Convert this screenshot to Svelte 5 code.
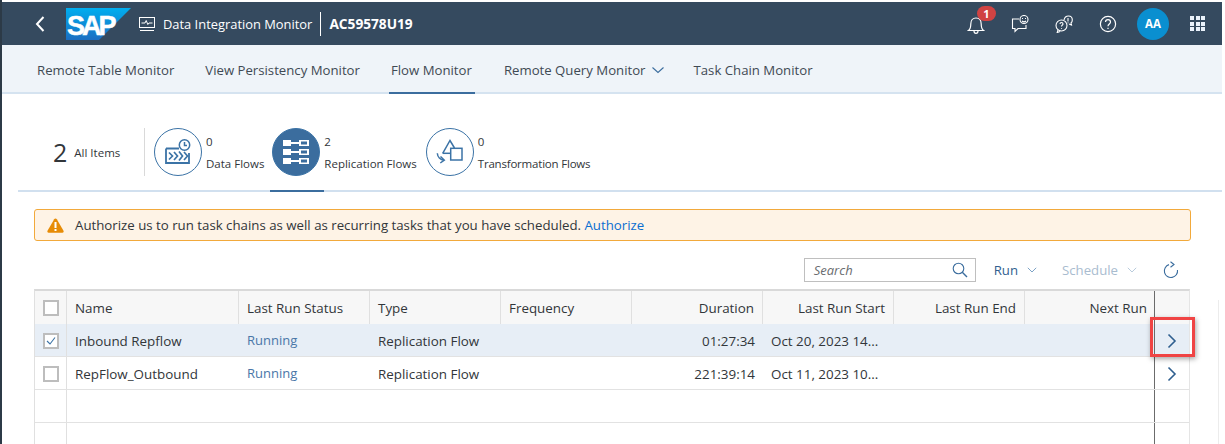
<script>
  const nav = ['Remote Table Monitor', 'View Persistency Monitor', 'Flow Monitor', 'Remote Query Monitor', 'Task Chain Monitor'];
  const heads = [
    { t: 'Name' }, { t: 'Last Run Status' }, { t: 'Type' }, { t: 'Frequency' },
    { t: 'Duration', r: true }, { t: 'Last Run Start', r: true }, { t: 'Last Run End', r: true }, { t: 'Next Run', r: true }
  ];
  const rows = [
    { sel: true, name: 'Inbound Repflow', status: 'Running', type: 'Replication Flow', dur: '01:27:34', start: 'Oct 20, 2023 14...' },
    { sel: false, name: 'RepFlow_Outbound', status: 'Running', type: 'Replication Flow', dur: '221:39:14', start: 'Oct 11, 2023 10...' }
  ];
</script>

<div class="page">
  <header class="shell">
    <svg class="back" width="12" height="18" viewBox="0 0 12 18"><path d="M9.5 2 L3 9 L9.5 16" fill="none" stroke="#fff" stroke-width="2"/></svg>
    <div class="logo">
      <svg width="65" height="32" viewBox="0 0 65 32">
        <defs><linearGradient id="sapg" x1="0" y1="0" x2="0" y2="1"><stop offset="0" stop-color="#00aeef"/><stop offset="1" stop-color="#1b6ec2"/></linearGradient></defs>
        <polygon points="0,0 65,0 33,32 0,32" fill="url(#sapg)"/>
      </svg>
      <span class="sap">SAP</span>
    </div>
    <svg class="monitor" width="18" height="16" viewBox="0 0 18 16" fill="none" stroke="#fff" stroke-width="1">
      <rect x="1.5" y="1.5" width="15" height="10"/><path d="M3.5 7h3.5l1.2-2.5 1.6 4 1.2-1.5h3.500"/><path d="M2 14.500h14"/>
    </svg>
    <span class="title">Data Integration Monitor</span>
    <span class="divider"></span>
    <span class="tenant">AC59578U19</span>
    <div class="actions">
      <div class="bell">
        <svg width="18" height="20" viewBox="0 0 18 20" fill="none" stroke="#fff" stroke-width="1.200">
          <path d="M1.500 16.500c2-1.500 2.300-3 2.300-6.500 0-3.500 2-6 5.200-6s5.200 2.500 5.200 6c0 3.500.3 5 2.300 6.500z"/><path d="M7 17c0 1.500 1 2.300 2 2.300s2-.8 2-2.300"/>
        </svg>
        <span class="badge">1</span>
      </div>
      <svg class="ic1" width="18" height="18" viewBox="0 0 18 18" fill="none" stroke="#fff" stroke-width="1.100">
        <path d="M8 4H1.500v9.500H4v3l3-3h8V10"/><circle cx="13" cy="4.500" r="4"/><path d="M11 3.500h1M14 3.500h1M11 6c1.200 1 2.800 1 4 0"/>
      </svg>
      <svg class="ic2" width="18" height="18" viewBox="0 0 18 18" fill="none" stroke="#fff" stroke-width="1.100">
        <circle cx="6.500" cy="10.500" r="5.500"/><path d="M3 15l-.8 2.500 3-1"/><path d="M5 9c0-2 3-2 3 0 0 1-1.500 1-1.500 2.500M6.500 13v.8"/>
        <path d="M9 5c.5-2.500 2.500-4 4.500-4 2.300 0 3.800 1.800 3.800 4 0 1.300-.5 2.300-1.300 3l.5 2-2.500-1"/><path d="M13 3v3.500M13 7.500v.8"/>
      </svg>
      <svg class="ic3" width="18" height="18" viewBox="0 0 18 18" fill="none" stroke="#fff" stroke-width="1.200">
        <circle cx="9" cy="9" r="7.600"/><path d="M6.500 7c0-3.200 5-3.200 5 0 0 2-2.500 2-2.500 4.300M9 12.800v1.200"/>
      </svg>
      <span class="avatar">AA</span>
      <div class="grid9"><i></i><i></i><i></i><i></i><i></i><i></i><i></i><i></i><i></i></div>
    </div>
  </header>

  <nav class="subnav">
    {#each nav as n, i}
      <span class="navitem" class:active={i === 2}>
        {n}
        {#if i === 3}
          <svg width="14" height="8" viewBox="0 0 14 8"><path d="M1.500 1.500 L7 6.500 L12.500 1.500" fill="none" stroke="#3b6d9e" stroke-width="1.100"/></svg>
        {/if}
      </span>
    {/each}
  </nav>

  <section class="tabs">
    <div class="allitems"><span class="big">2</span><span class="small">All Items</span></div>
    <span class="tabsep"></span>
    <div class="tab">
      <span class="circle">
        <svg width="26" height="26" viewBox="0 0 26 26" fill="none" stroke="#3b73a6" stroke-width="1.500">
          <path d="M1 9.500v14.500h23V14" stroke-width="1.800"/><path d="M1 9.500h13" stroke-width="2"/>
          <path d="M4 13.500l3.500 3.500L4 20.500M9 13l3.500 4-3.500 4M14 12.500l3.500 4.500L14 21.500M19 13l3.500 4L19 21" stroke-width="1.700"/>
          <circle cx="19.500" cy="6" r="5.200" fill="#fff"/><path d="M19.500 3v3.500h2.500"/>
        </svg>
      </span>
      <div class="tabtext"><span>0</span><span>Data Flows</span></div>
    </div>
    <div class="tab selected">
      <span class="circle filled">
        <svg width="26" height="24" viewBox="0 0 26 24">
          <g fill="#fff">
            <path d="M0 0h8v2h8V0h10v6H16V4H8v2H0z M18 1.500v3h6v-3z" fill-rule="evenodd"/>
            <path d="M0 9h8v2h8V9h10v6H16v-2H8v2H0z M18 10.500v3h6v-3z" fill-rule="evenodd"/>
            <path d="M0 18h8v2h8v-2h10v6H16v-2H8v2H0z M18 19.500v3h6v-3z" fill-rule="evenodd"/>
          </g>
        </svg>
      </span>
      <div class="tabtext"><span>2</span><span>Replication Flows</span></div>
    </div>
    <div class="tab">
      <span class="circle">
        <svg width="28" height="26" viewBox="0 0 28 26" fill="none" stroke="#3b73a6" stroke-width="1.500">
          <path d="M6.700 14.300 L14 1.500 L18.500 9"/><path d="M6.700 14.300H14.500"/>
          <rect x="14.700" y="9.300" width="11.300" height="11.700"/>
          <path d="M1.300 14.300c.3 3.500 3 6.500 6.700 6.900"/><path d="M4.500 17.500l3.800 3.700-4 2.800"/>
        </svg>
      </span>
      <div class="tabtext tight"><span>0</span><span>Transformation Flows</span></div>
    </div>
  </section>

  <div class="strip">
    <svg width="17" height="15" viewBox="0 0 17 15">
      <path d="M8.500 .5c.6 0 1 .3 1.300.8l6.700 11.500c.5.900 0 2-1.100 2H1.600C.5 14.800 0 13.700.5 12.800L7.200 1.300C7.500.8 7.900.5 8.500.5z" fill="#e78c07"/>
      <rect x="7.500" y="4" width="2" height="6" fill="#fff"/><rect x="7.500" y="11" width="2" height="2" fill="#fff"/>
    </svg>
    <span>Authorize us to run task chains as well as recurring tasks that you have scheduled. <a href="#top">Authorize</a></span>
  </div>

  <div class="toolbar">
    <div class="search">
      <span>Search</span>
      <svg width="16" height="16" viewBox="0 0 16 16" fill="none" stroke="#3b6d9e" stroke-width="1.100"><circle cx="6.500" cy="6.500" r="5.300"/><path d="M10.300 10.300L15 15" stroke-width="1.400"/></svg>
    </div>
    <span class="tbtn">Run <svg width="10" height="6" viewBox="0 0 10 6"><path d="M.8.800 5 5 9.200.800" fill="none" stroke="#7da3c6"/></svg></span>
    <span class="tbtn off">Schedule <svg width="10" height="6" viewBox="0 0 10 6"><path d="M.8.800 5 5 9.200.800" fill="none" stroke="#b9cbdc"/></svg></span>
    <svg class="refresh" width="16" height="18" viewBox="0 0 16 18" fill="none" stroke="#3b6d9e" stroke-width="1.100"><path d="M6 3.600A6.600 6.600 0 1 0 14.500 9"/><path d="M8.500 .8 12 3.500 8.500 6.200" transform="translate(-1 0)"/></svg>
  </div>

  <div class="table">
    <div class="row head">
      <div class="cell chk"><span class="box"></span></div>
      {#each heads as h}
        <div class="cell" class:right={h.r}>{h.t}</div>
      {/each}
      <div class="cell nav"></div>
    </div>
    {#each rows as r}
      <div class="row" class:sel={r.sel}>
        <div class="cell chk">
          <span class="box">
            {#if r.sel}<svg width="12" height="10" viewBox="0 0 12 10"><path d="M2 5l3 3 5-6.500" fill="none" stroke="#3b73a6" stroke-width="1.100"/></svg>{/if}
          </span>
        </div>
        <div class="cell">{r.name}</div>
        <div class="cell link">{r.status}</div>
        <div class="cell">{r.type}</div>
        <div class="cell"></div>
        <div class="cell right">{r.dur}</div>
        <div class="cell">{r.start}</div>
        <div class="cell"></div>
        <div class="cell"></div>
        <div class="cell nav">
          <svg width="10" height="16" viewBox="0 0 10 16"><path d="M1.500 1.500 8 8 1.500 14.500" fill="none" stroke="#2f5f8f" stroke-width="1.600"/></svg>
        </div>
      </div>
    {/each}
    {#each [0, 1] as _}
      <div class="row empty">
        <div class="cell chk"></div>
        {#each heads as _h}<div class="cell blank"></div>{/each}
        <div class="cell nav"></div>
      </div>
    {/each}
    <span class="callout"></span>
  </div>
</div>

<style>
  :global(body) { margin: 0; background: #fff; }
  .page {
    position: relative;
    width: 1225px;
    height: 444px;
    overflow: hidden;
    box-sizing: border-box;
    padding: 2px 3px 0 2px;
    background: #fff;
    font-family: "Open Sans", "Liberation Sans", sans-serif;
    font-size: 12.500px;
    color: #32363a;
  }
  .page::before {
    content: "";
    position: absolute;
    left: 0; top: 0; bottom: 0;
    width: 2px;
    background: #2c3a47;
  }
  .page::after {
    content: "";
    position: absolute;
    left: 1218px; top: 300px; bottom: 0;
    width: 1px;
    background: #ececec;
  }
  .shell {
    height: 43px;
    background: #354a5f;
    display: flex;
    align-items: center;
    color: #fff;
  }
  .back { margin-left: 32px; }
  .logo { position: relative; margin-left: 20px; width: 65px; height: 32px; margin-top: 1px; }
  .logo svg { display: block; }
  .sap {
    position: absolute;
    left: 1px; top: 5px;
    font: 700 27px/26px "Liberation Sans", sans-serif;
    letter-spacing: -3px;
    -webkit-text-stroke: .5px #fff;
    color: #fff;
  }
  .monitor { margin-left: 7px; }
  .title { margin-left: 7px; font-size: 12.900px; }
  .divider { width: 1px; height: 24px; background: #fff; margin: 0 8px 0 8px; }
  .tenant { font-weight: 700; font-size: 13.700px; }
  .actions { margin-left: auto; display: flex; align-items: center; }
  .bell { position: relative; width: 18px; height: 20px; margin-right: 26px; }
  .bell svg { display: block; }
  .badge {
    position: absolute;
    left: 10px; top: -8px;
    width: 19px; height: 15px;
    border-radius: 8px;
    background: #d04343;
    font-size: 11px;
    font-weight: 700;
    line-height: 15px;
    text-align: center;
  }
  .ic1 { margin-right: 26px; }
  .ic2 { margin-right: 26px; }
  .ic3 { margin-right: 20px; }
  .avatar {
    width: 32px; height: 32px;
    border-radius: 50%;
    background: #0a8fd0;
    font-weight: 700;
    font-size: 11.500px;
    line-height: 32px;
    text-align: center;
    margin-right: 21px;
  }
  .grid9 {
    display: grid;
    grid-template-columns: repeat(3, 4px);
    grid-auto-rows: 4px;
    gap: 1.500px;
    margin-right: 17px;
  }
  .grid9 i { background: #eaf2fb; }
  .subnav {
    height: 47px;
    background: #eff4f9;
    border-bottom: 2px solid #d5e3f0;
    display: flex;
    padding-left: 35px;
    gap: 31px;
  }
  .navitem {
    display: flex;
    align-items: center;
    gap: 5px;
    font-size: 13.200px;
    color: #3f4a54;
    position: relative;
    padding-top: 2px;
  }
  .navitem svg { margin-right: -2px; }
  .navitem.active { margin-right: 1px; }
  .navitem.active::after {
    content: "";
    position: absolute;
    left: -2px; right: -3px; bottom: -2px;
    height: 2px;
    background: #3b6d9e;
  }
  .tabs {
    margin-left: 16px;
    height: 98px;
    box-sizing: border-box;
    border-bottom: 2px solid #d1e0ef;
    display: flex;
    align-items: flex-start;
    padding-top: 34px;
  }
  .allitems { display: flex; align-items: center; width: 91px; height: 48px; padding-left: 35px; gap: 7px; }
  .big { font-size: 25px; line-height: 48px; }
  .small { font-size: 11.500px; }
  .tabsep { width: 1px; height: 48px; background: #d9d9d9; margin-right: 9px; }
  .tab { display: flex; position: relative; margin-right: 8px; }
  .circle {
    width: 46px; height: 46px;
    border: 1px solid #3b73a6;
    border-radius: 50%;
    display: flex;
    align-items: center;
    justify-content: center;
    flex: none;
    margin-right: 4px;
  }
  .circle.filled { background: #3b6d9e; }
  .tabtext { display: flex; flex-direction: column; gap: 10px; font-size: 11.500px; line-height: 12px; padding-top: 8px; white-space: nowrap; }
  .tabtext.tight { letter-spacing: -.2px; }
  .tab.selected { height: 48px; margin-right: 9px; }
  .tab.selected::after {
    content: "";
    position: absolute;
    left: -2px; width: 54px; bottom: -16px;
    height: 2px;
    background: #3b6d9e;
  }
  .strip {
    margin: 17px 31px 0 32px;
    height: 32px;
    box-sizing: border-box;
    background: #fef3e6;
    border: 1px solid #f2a93b;
    border-radius: 3px;
    display: flex;
    align-items: center;
    gap: 11px;
    padding-left: 12px;
    font-size: 13.250px;
  }
  .strip a { color: #0a6ed1; text-decoration: none; }
  .toolbar {
    margin: 17px 33px 0 32px;
    height: 24px;
    display: flex;
    align-items: center;
    justify-content: flex-end;
  }
  .search {
    width: 172px; height: 24px;
    box-sizing: border-box;
    border: 1px solid #bfbfbf;
    display: flex;
    align-items: center;
    justify-content: space-between;
    padding: 0 7px 0 9px;
    font-style: italic;
    color: #6a6d70;
    font-size: 13px;
    margin-right: 18px;
  }
  .tbtn { display: flex; align-items: center; gap: 9px; color: #32608f; margin-right: 25px; font-size: 13.200px; }
  .tbtn.off { color: #a9bccf; margin-right: 26px; }
  .refresh { margin-right: 10px; }
  .table { position: relative; margin: 7px 32px 0 32px; border-top: 2px solid #d9d9d9; border-left: 1px solid #e0e0e0; border-right: 1px solid #e5e5e5; }
  .row {
    display: grid;
    grid-template-columns: 32px 172px 131px 131px 131px 131px 131px 131px 129px 1fr;
    height: 33px;
    box-sizing: border-box;
    border-bottom: 1px solid #e2e2e2;
  }
  .row.head { height: 33px; background: #f7f7f7; border-bottom: 0; }
  .row.sel { background: #e7eef6; }
  .cell {
    box-sizing: border-box;
    display: flex;
    align-items: center;
    padding: 0 8px;
    white-space: nowrap;
    font-size: 13.400px;
    min-width: 0;
  }
  .row:not(.head) .cell { padding-top: 1px; }
  .head .cell { border-right: 1px solid #e0e0e0; }
  .head .cell:nth-child(9) { padding-right: 7px; }
  .head .cell:nth-last-child(2), .cell.blank { border-right: 0; }
  .cell.chk { border-right: 1px solid #e0e0e0; justify-content: center; padding: 0; }
  .cell.right { justify-content: flex-end; }
  .cell.link { color: #4a76a8; font-size: 13px; padding-bottom: 2px; }
  .cell.nav { border-left: 1px solid #6b6b6b; justify-content: center; padding: 0; }
  .head .cell.nav { border-right: 0; }
  .box {
    width: 16px; height: 16px;
    box-sizing: border-box;
    border: 2px solid #bdbdbd;
    background: #fff;
    display: flex;
    align-items: center;
    justify-content: center;
  }
  .callout {
    position: absolute;
    left: 1115px; top: 26px;
    width: 45px; height: 40px;
    box-sizing: border-box;
    border: 3px solid #f04444;
    box-shadow: 1px 2px 5px rgba(0, 0, 0, .35);
  }
</style>
